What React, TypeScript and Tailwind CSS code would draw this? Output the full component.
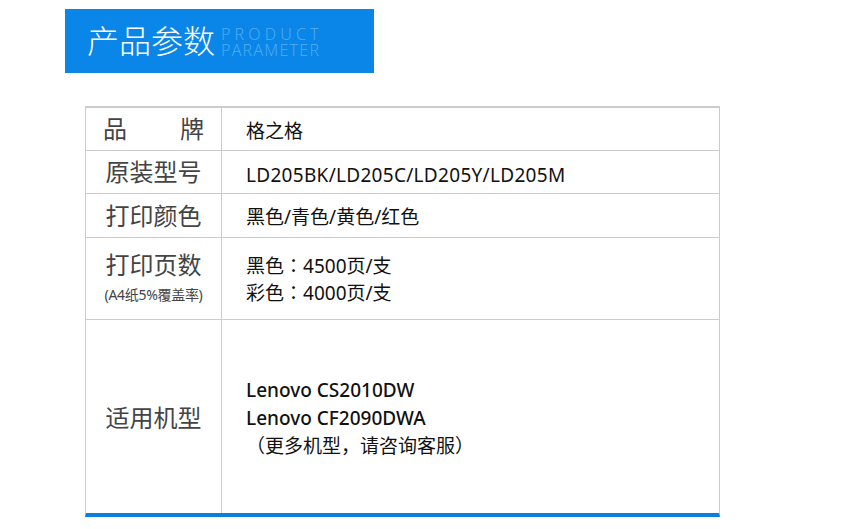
const cjk = "font-['Noto_Sans','Noto_Sans_CJK_SC',sans-serif]";

function Colon() {
  return <span className="font-['Noto_Sans_CJK_TC',sans-serif]">：</span>;
}

export default function App() {
  return (
    <div className={`min-h-[529px] w-[855px] bg-white pt-[9px] pl-[65px] ${cjk}`}>
      {/* Banner */}
      <div className="flex h-[64px] w-[309px] items-center bg-[#0a86e9] pl-[22px]">
        <span className="text-[32px] font-light leading-none text-white">产品参数</span>
        <div className="ml-[6px] flex flex-col pt-[2px] font-['Open_Sans',sans-serif] text-[16px] font-light leading-[16px] text-[#58aef2]">
          <span className="tracking-[4.2px]">PRODUCT</span>
          <span className="tracking-[1.3px]">PARAMETER</span>
        </div>
      </div>

      {/* Table */}
      <div className="mt-[33px] ml-[20px] w-[635px] border-x border-[#cccccc] border-b-[4px] border-b-[#0b7fe0]">
        <div className="grid h-[44px] grid-cols-[136px_1fr] border-t-2 border-[#cccccc]">
          <div className="flex items-center justify-between border-r border-[#cccccc] px-[17px] text-[24px] text-[#444]">
            <span>品</span>
            <span>牌</span>
          </div>
          <div className="flex items-center pt-[5px] pl-[24px] text-[19px] text-[#111]">格之格</div>
        </div>

        <div className="grid h-[43px] grid-cols-[136px_1fr] border-t border-[#cccccc]">
          <div className="flex items-center justify-center border-r border-[#cccccc] text-[24px] text-[#444]">
            原装型号
          </div>
          <div className="flex items-center pt-[7px] pl-[24px] text-[19px] tracking-[0.3px] text-[#111]">
            LD205BK/LD205C/LD205Y/LD205M
          </div>
        </div>

        <div className="grid h-[44px] grid-cols-[136px_1fr] border-t border-[#cccccc]">
          <div className="flex items-center justify-center border-r border-[#cccccc] text-[24px] text-[#444]">
            打印颜色
          </div>
          <div className="flex items-center pt-[4px] pl-[24px] text-[19px] text-[#111]">黑色/青色/黄色/红色</div>
        </div>

        <div className="grid h-[82px] grid-cols-[136px_1fr] border-t border-[#cccccc]">
          <div className="flex flex-col items-center justify-center border-r border-[#cccccc] pt-[3px] text-[#444]">
            <span className="text-[24px] leading-[30px]">打印页数</span>
            <span className="text-[14px] leading-[30px] tracking-[-0.3px]">(A4纸5%覆盖率)</span>
          </div>
          <div className="flex flex-col justify-center pt-[1px] pl-[24px] text-[19px] leading-[26px] text-[#111]">
            <span>
              黑色<Colon />4500页/支
            </span>
            <span>
              彩色<Colon />4000页/支
            </span>
          </div>
        </div>

        <div className="grid h-[194px] grid-cols-[136px_1fr] border-t border-[#cccccc]">
          <div className="flex items-center justify-center border-r border-[#cccccc] pt-[2px] text-[24px] text-[#444]">
            适用机型
          </div>
          <div className="flex flex-col justify-center pt-[2px] pl-[24px] text-[19px] leading-[28px] text-[#111]">
            <span className="font-medium">Lenovo CS2010DW</span>
            <span className="font-medium">Lenovo CF2090DWA</span>
            <span>（更多机型，请咨询客服）</span>
          </div>
        </div>
      </div>
    </div>
  );
}
